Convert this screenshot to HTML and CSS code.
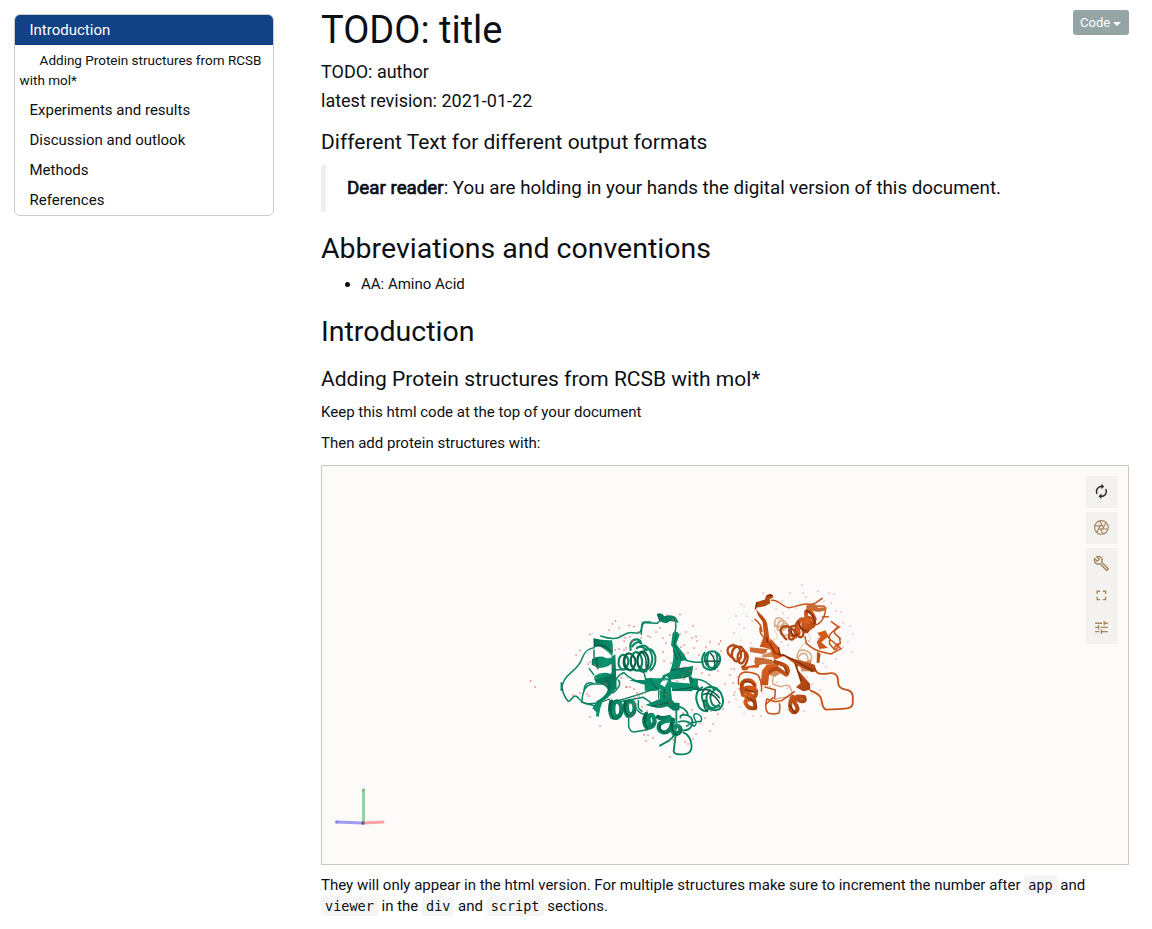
FILE: index.html
```html
<!DOCTYPE html>
<html lang="en">
<head>
<meta charset="utf-8">
<title>TODO: title</title>
<link rel="stylesheet" href="styles.css">
</head>
<body>
<div class="page">
  <nav class="toc">
    <a class="toc-item active">Introduction</a>
    <a class="toc-item sub">Adding Protein structures from RCSB with mol*</a>
    <a class="toc-item">Experiments and results</a>
    <a class="toc-item">Discussion and outlook</a>
    <a class="toc-item">Methods</a>
    <a class="toc-item">References</a>
  </nav>
  <main class="content">
    <header class="head">
      <h1 class="title">TODO: title</h1>
      <button class="code-btn">Code<span class="caret"></span></button>
    </header>
    <h4 class="meta">TODO: author</h4>
    <h4 class="meta">latest revision: 2021-01-22</h4>
    <h3 class="h3 first">Different Text for different output formats</h3>
    <blockquote class="quote"><span class="strong">Dear reader</span>: You are holding in your hands the digital version of this document.</blockquote>
    <h2 class="h2">Abbreviations and conventions</h2>
    <ul class="list"><li>AA: Amino Acid</li></ul>
    <h2 class="h2 intro">Introduction</h2>
    <h3 class="h3 second">Adding Protein structures from RCSB with mol*</h3>
    <p class="para">Keep this html code at the top of your document</p>
    <p class="para">Then add protein structures with:</p>
    <section class="viewer">
      <svg class="scene" viewBox="322 466 806 398" fill="none" stroke-linecap="round" stroke-linejoin="round">
        <defs>
          <linearGradient id="g" x1="0" y1="0" x2="1" y2="1"><stop offset="0" stop-color="#006b50"/><stop offset=".5" stop-color="#0b9470"/><stop offset="1" stop-color="#046e53"/></linearGradient>
          <linearGradient id="o" x1="0" y1="0" x2="1" y2="1"><stop offset="0" stop-color="#a6430f"/><stop offset=".5" stop-color="#d75c1c"/><stop offset="1" stop-color="#9c3f10"/></linearGradient>
        </defs>

        <!-- chain A, upper left -->
        <g transform="translate(550 600) scale(.33333)" stroke="#0a8464">
          <g stroke-width="4.500">
            <path d="M152 108C175 116 190 118 205 113S228 96 245 98S272 102 274 87S274 66 285 66H302"/>
            <path d="M132 143C112 146 104 155 98 172S84 201 64 217S38 245 34 270M130 250C114 244 104 252 102 270"/>
            <path d="M132 150Q130 190 144 206M118 206L131 224M190 210Q240 205 290 215M184 270Q200 222 222 218Q244 242 285 249"/>
          </g>
          <path fill="url(#g)" stroke="none" d="M130 115Q158 122 186 121Q192 150 186 168Q150 128 131 144ZM126 177Q150 164 168 174Q188 178 188 162L190 184Q178 205 145 204L125 194ZM133 228Q158 212 182 222L190 206V235Q178 252 146 248L133 240ZM184 170l12-7 4 105-14-2Z"/>
          <path stroke="#07583f" stroke-width="3.500" d="M137 138Q158 127 184 155M139 174L142 200"/>
          <g stroke-width="6.500">
            <path d="M216 208Q202 201 207 178Q212 160 226 166Q242 178 230 201Q220 214 213 205"/>
            <path stroke="#066549" d="M237 209Q217 203 222 177Q229 151 248 165Q264 184 250 204Q241 217 233 206"/>
            <path d="M257 211Q238 199 243 174Q252 146 270 163Q284 188 269 207Q259 218 251 206"/>
            <path stroke="#055e45" d="M279 211Q258 201 263 172Q273 145 288 160Q301 178 292 203Q283 216 275 207"/>
            <path d="M242 150Q237 127 251 120Q269 113 274 130Q259 120 247 139M260 145Q272 133 290 151"/>
          </g>
          <path stroke="#045c43" stroke-width="4" d="M228 166Q218 188 232 208M247 165Q236 188 252 209M267 163Q256 186 272 210"/>
          <path fill="url(#g)" stroke="none" d="M284 237H322V272H284Z"/>
        </g>

        <!-- chain A, upper right -->
        <g transform="translate(640 600) scale(.33333)" stroke="#0a8464">
          <path stroke-width="4.500" d="M4 103Q4 66 16 68L52 70L60 62M107 64Q110 84 103 104M137 180Q153 188 189 187M164 237Q200 238 222 269M-5 212L12 218L18 240"/>
          <path fill="url(#g)" stroke="none" d="M50 42Q66 36 73 49Q92 42 107 51L117 68L90 63Q80 75 57 62ZM98 99Q110 88 119 105L109 132Q121 148 133 164L142 180L124 183L116 211L88 219Q105 180 99 145L93 135ZM116 205L160 198L155 226L136 234L60 243L69 226ZM16 239L30 233L68 238L94 242L99 262L34 273H16ZM80 228L60 252L80 265L92 242ZM144 224Q164 231 181 270H154Z"/>
          <path stroke="#07523c" stroke-width="3" d="M108 106L103 134L126 181M100 150L112 178M94 210L130 204"/>
          <path stroke-width="6" d="M0 140Q17 130 29 151Q45 177 29 203Q15 218 0 207M12 151Q36 137 46 169Q49 199 31 211M194 158Q180 176 191 200Q211 219 230 202Q248 180 236 162Q218 148 203 158Q188 171 199 193Q212 211 227 199M207 156Q196 175 207 202M226 155Q240 174 224 208"/>
          <path stroke="#075c43" stroke-width="4.500" d="M1 156Q22 162 18 200M193 184H240M211 159Q229 177 223 207"/>
        </g>

        <!-- chain A, lower half -->
        <g transform="translate(550 680) scale(.33333)" stroke="#0a8464">
          <g stroke-width="4.500">
            <path d="M34 30V8C36 30 42 50 53 62C60 70 66 48 76 48C86 48 92 70 108 71S135 70 150 68"/>
            <path d="M96 61Q99 16 128 12H170M94 66L143 80M205 0Q218 15 189 39M200 63Q250 50 310 28M195 68L280 52L319 79"/>
            <path d="M236 112V139Q240 155 252 156L292 149M262 90Q274 105 290 102M265 62V84L276 94"/>
            <path stroke-width="5.500" d="M330 197L358 181Q378 168 379 131M378 155L371 215Q375 225 398 223Q425 223 425 199Q423 167 400 157M379 71V145M414 104Q405 79 379 80M391 113Q390 104 402 104Q430 107 427 131Q422 151 400 151"/>
            <path d="M385 126Q411 117 432 139Q444 132 433 115Q428 100 440 101Q460 108 453 124Q423 125 410 139"/>
          </g>
          <path fill="url(#g)" stroke="none" d="M136 0L193 -18Q207 21 187 39Q175 54 158 64L151 85L146 111L138 108L139 97L127 85L141 62Q166 50 174 29Q162 9 136 8ZM237 0H281L316 17L278 13ZM286 -5H363V35H333V24L287 25ZM306 -5L325 27L342 25L355 0ZM328 31L363 30L366 59L374 68L389 69L388 91L370 92L352 79Q330 88 307 80L286 75L309 65L330 56ZM366 6L429 11V-5L444 1L443 22L427 25V34L366 33Z"/>
          <path stroke="#06553f" stroke-width="3" d="M170 0Q184 18 174 32M302 4L326 31V55M343 29L342 52M367 31L427 22M305 79L360 67M158 65L179 57"/>
          <g stroke="url(#g)" stroke-width="13">
            <path d="M184 65Q176 90 186 111Q205 120 213 99Q218 72 202 64Q188 64 190 93Q191 111 203 109"/>
            <path d="M228 66Q219 87 232 107Q252 109 254 85Q253 62 239 63Q226 69 233 96Q239 108 249 99"/>
            <path d="M289 102Q276 126 291 144Q310 144 314 125Q312 103 302 105Q291 112 299 134"/>
            <path d="M324 111Q333 118 358 111L368 128Q359 160 340 157Q320 153 329 131Q348 119 365 121"/>
            <path d="M369 119Q360 144 372 161Q388 164 392 149Q388 132 374 141"/>
          </g>
          <path stroke="#045a42" stroke-width="5" d="M181 66Q176 92 190 114M226 67Q220 90 234 107M287 107Q279 128 292 144M329 134Q326 152 343 158M366 131Q363 152 378 163"/>
          <g stroke-width="6"><path d="M456 22Q432 37 441 67Q448 94 472 94Q477 72 464 61M466 25Q492 12 512 38Q528 70 509 87Q483 98 465 74Q447 47 462 28Q482 12 506 33M480 30Q461 48 475 76Q490 94 506 75M500 25Q475 39 483 64Q488 83 508 79"/></g>
          <path stroke="#075b43" stroke-width="4.500" d="M447 31Q480 20 508 53M460 44Q487 31 510 71M470 91Q460 82 461 62"/>
        </g>

        <!-- chain B -->
        <g transform="translate(715 575) scale(.33333)" stroke="#c65319">
          <g stroke="#d9aa87" stroke-width="4.500">
            <path d="M179 155Q176 131 190 128Q208 130 205 146Q185 165 183 151M187 165Q186 139 202 136Q221 141 214 158Q194 177 191 163M197 177Q197 147 213 145Q228 151 226 172Q208 190 202 174"/>
            <path stroke="#efdccd" d="M177 165Q192 181 184 191Q168 196 172 205M262 170Q294 178 283 197Q262 205 253 226"/>
            <path d="M247 239Q251 222 269 226Q291 232 290 251Q281 264 265 261Q242 252 247 238M250 247Q258 232 272 236Q286 251 274 270M187 285Q168 308 174 328L198 335Q225 323 228 344Q238 355 219 367Q184 368 172 379"/>
            <path fill="#d78b58" stroke="none" d="M142 239L175 229L178 247L141 247ZM143 263L183 256L182 272L144 267ZM160 284L198 281L198 294L181 305L159 299ZM252 267L289 254V289H261Z"/>
          </g>
          <g stroke-width="4.500">
            <path d="M170 76C190 72 204 98 222 98S258 84 280 87S302 82 322 70M283 92L328 94Q337 112 319 139Q305 154 288 150M322 126L340 125M349 140L372 157Q342 174 340 189Q365 208 378 221M343 183L344 207L359 224Q369 224 370 207Q361 207 359 220"/>
            <path d="M120 133Q138 145 141 169M137 151Q130 174 148 188M270 185L274 205Q296 225 319 230L347 237M347 237Q366 228 378 221M372 154Q355 163 359 175L376 191M374 190L376 205L365 213"/>
            <path stroke-width="5.500" d="M299 281C305 300 322 297 338 296C358 291 369 300 369 315C368 344 386 341 402 347C416 352 414 370 413 388C409 405 385 400 334 404C321 402 322 382 318 370C314 358 300 352 287 347"/>
            <path d="M71 328Q66 295 90 291Q118 292 130 301Q143 327 139 348M150 336L181 345L179 370M155 373Q148 403 159 414Q175 420 192 414Q197 394 193 386M157 372L178 380L200 377L238 350M154 387L174 368"/>
          </g>
          <path fill="url(#o)" stroke="none" d="M123 82L151 73Q149 58 168 56L176 67L164 73L166 85L150 94L122 98L119 107ZM123 103L137 118Q153 130 157 148L164 196L176 203L183 217L205 244L178 255L167 224L151 218L134 215L147 183L143 141L129 121ZM166 190L192 218L190 238L299 269L305 289L291 292L249 272L247 283L285 326L286 344L265 349L243 337L257 324L239 266L201 240L180 253L169 235Z"/>
          <path fill="#c86b34" stroke="none" d="M104 217L158 222L153 234L143 237L105 231ZM120 247L140 248L173 255L171 266L148 267L121 272L118 261ZM274 91L299 87L309 98L336 97L333 106L311 111L274 104Z"/>
          <path fill="url(#o)" stroke="none" d="M81 277L135 267L130 278H103Q96 290 80 285ZM307 174L331 166L341 184L319 202L338 219L313 222L305 201L316 185ZM306 229L317 236L313 264L305 263ZM141 287L155 269L188 267L193 280L164 285L159 331H137Z"/>
          <g stroke="#b24914" stroke-width="7">
            <path d="M58 253Q30 235 40 218Q53 203 73 219Q84 243 72 256Q58 267 50 240Q52 210 79 216Q97 234 88 256Q77 276 68 253Q65 227 87 227Q102 236 97 255Q92 274 82 276"/>
            <path d="M214 193Q190 171 199 160Q213 145 238 167Q245 183 233 193Q219 196 222 180M238 188Q216 171 225 157Q238 146 262 162Q271 180 258 187Q237 183 243 148Q252 127 270 139Q291 158 277 171Q259 172 264 136Q272 119 292 131Q304 149 288 159"/>
          </g>
          <g stroke="url(#o)" stroke-width="12">
            <path d="M229 180Q242 190 251 175Q247 145 257 134Q271 128 273 163Q288 166 286 141Q269 127 274 109Q289 104 299 132L294 153"/>
            <path d="M84 360Q74 326 88 318Q108 311 119 329Q121 345 97 350Q82 351 88 341Q110 332 123 347Q126 370 99 374Q87 366 100 358Q119 360 121 399Q98 404 91 382Q91 370 117 374"/>
            <path d="M165 290Q173 281 188 281L213 299Q223 293 216 277Q206 267 180 261M233 365Q222 379 227 404Q240 421 248 402Q242 382 230 376Q240 360 267 366Q275 382 256 378L232 367"/>
          </g>
          <path stroke="#7f2d08" stroke-width="4" d="M163 203L180 234L194 240M191 218L194 239L205 242M155 188L158 201M91 319Q113 320 118 331M91 344L117 351M97 366L117 381M240 265L259 317M204 239L244 259L293 287M274 108Q297 112 300 146M228 164Q232 193 249 177M249 138Q256 166 275 168M223 390L240 413M208 277L217 297M126 83L122 101M157 62L172 61"/>
        </g>

        <!-- water molecules -->
        <g stroke="#ea5555" stroke-width="1.400">
          <path d="M530.500 681h.1M535 687h.1M576 655h.1M580 650.500h.1M590 634.500h.1M609 630h.1M612.500 624h.1M615.500 621h.1M619 628h.1M629 625.500h.1M634 626.500h.1M638 632h.1M620 636h.1M625 638h.1M624 641h.1M630 637h.1M633 641h.1M641 638h.1M648 636h.1M612 648h.1M615 650h.1M619 649h.1M624 650h.1M626 648h.1M588 664h.1M590 662h.1M595 665h.1M598 668h.1M612 665h.1M621 678h.1M627 687h.1M630 687h.1M606 684h.1"/>
          <path d="M667 615h.1M680 614.500h.1M673 620h.1M675.500 621.500h.1M693 626h.1M660 628h.1M656 632h.1M650 637h.1M663 638h.1M670 635h.1M680 634h.1M686 632h.1M692 638h.1M696 636.500h.1M697 641h.1M681 647h.1M684 645h.1M666 643h.1M663 652h.1M664 661h.1M671 663h.1M677 668h.1M684 654h.1M688 653h.1M694 648h.1M699 655h.1M706 647h.1M710 642h.1M719 644h.1M720.500 641h.1M721 651h.1M714 656h.1M710 661h.1M685 667h.1M690 671h.1M696 669h.1M702 673h.1M709 675h.1M718 671h.1M730 675h.1M734 669h.1M683 676h.1M677 681h.1M684 679h.1M725 684h.1"/>
          <path d="M573 695h.1M580 693h.1M587 694h.1M589 696h.1M590 717h.1M600 726h.1M626 687h.1M634 689h.1M637 693h.1M635 698h.1M639 696h.1M642 694h.1M628 704h.1M634 705h.1M637 704h.1M642 707h.1M629 714h.1M633 715h.1M647 711h.1M658 705h.1M665 694h.1M670 703h.1M645 730h.1M644 735h.1M648 735h.1M653 738h.1M646 741h.1M673 740h.1M676 737h.1M685 742h.1M688 744h.1M693 739h.1M696 734h.1M700 723h.1M705 718h.1M711 711h.1M713 724h.1M710 731h.1M723 709h.1M718 714h.1M692 710h.1M683 713h.1M670 757h.1M733 683h.1M734 695h.1M729 702h.1M739 689h.1"/>
          <path stroke-width="1.200" d="M802 585h.1M790 593h.1M803 593h.1M806 597h.1M818 591h.1M829 593h.1M834 594h.1M824 601h.1M831 603h.1M836 611h.1M841 612h.1M843 623h.1M840 627h.1M850 626h.1M853 634h.1M848 642h.1M852 652h.1M836 659h.1M832 654h.1M823 663h.1M826 667h.1M839 649h.1M827 647h.1M843 647h.1M741 604h.1M744 606h.1M736 616h.1M739 624h.1M734 633h.1M741 640h.1M744 628h.1M751 643h.1M755 609h.1M747 616h.1M752 621h.1M763 593h.1M782 601h.1M776 609h.1M783 613h.1M779 621h.1M788 618h.1M796 608h.1M805 615h.1M812 629h.1M818 638h.1M809 641h.1M820 647h.1M788 645h.1M781 642h.1M770 643h.1M794 660h.1M802 671h.1M807 677h.1M812 684h.1M820 690h.1M812 694h.1M777 682h.1M787 688h.1M770 686h.1M763 693h.1M768 700h.1M735 692h.1M736 699h.1M740 707h.1M744 714h.1M753 716h.1M761 716h.1M791 710h.1M798 705h.1M804 711h.1M820 704h.1M737 677h.1M731 669h.1M744 662h.1M733 643h.1"/>
        </g>

        <!-- axes -->
        <g stroke-width="3"><path stroke="#9c9cf2" d="M336.500 822L363 823"/><path stroke="#f8a3a3" d="M363 823L383 822"/><path stroke="#9bcf9f" d="M363.500 822V790"/></g>
        <g stroke="none"><circle cx="363" cy="823" r="1.700" fill="#8c4779"/><circle cx="337" cy="822" r="1.500" fill="#8585df"/><circle cx="363.500" cy="790" r="1.500" fill="#78b77e"/></g>
      </svg>
      <div class="controls">
        <div class="group"><span class="tool dark"><svg class="icon" viewBox="0 0 24 24"><path d="M12 6v3l4-4-4-4v3c-4.420 0-8 3.580-8 8 0 1.570.46 3.030 1.240 4.260L6.700 14.800c-.45-.83-.7-1.790-.7-2.800 0-3.310 2.690-6 6-6zm6.760 1.740L17.300 9.200c.44.84.7 1.790.7 2.800 0 3.310-2.690 6-6 6v-3l-4 4 4 4v-3c4.420 0 8-3.580 8-8 0-1.570-.46-3.030-1.240-4.260z"/></svg></span></div>
        <div class="group"><span class="tool"><svg class="icon" viewBox="0 0 24 24"><g fill="none" stroke="currentColor" stroke-width="1.700"><circle cx="12" cy="12" r="9.800"/><path d="M13.500 9.400L9.200 2.600M15 12L18.600 4.900M13.500 14.600L21.500 14.300M10.500 14.600L14.800 21.400M9 12L5.400 19.100M10.500 9.400L2.500 9.700M10.500 9.400H13.500L15 12L13.500 14.600H10.500L9 12Z"/></g></svg></span></div>
        <div class="group">
          <span class="tool"><svg class="icon" viewBox="0 0 24 24"><path d="M22.610 18.990l-9.080-9.080c.93-2.340.45-5.100-1.440-7C9.790.61 6.210.4 3.660 2.260L7.500 6.110 6.080 7.520 2.250 3.690C.39 6.230.6 9.820 2.900 12.110c1.860 1.860 4.570 2.350 6.890 1.480l9.110 9.110c.39.39 1.020.39 1.410 0l2.300-2.300c.4-.38.4-1.010 0-1.410zm-3 1.600l-9.460-9.460c-.61.45-1.290.72-2 .82-1.360.2-2.790-.21-3.830-1.250C3.370 9.760 2.930 8.500 3 7.260l3.090 3.090 4.240-4.240-3.090-3.090c1.240-.07 2.490.37 3.440 1.310 1.080 1.080 1.490 2.570 1.240 3.960-.12.71-.42 1.370-.88 1.960l9.450 9.450-.88.89z"/></svg></span>
          <span class="tool"><svg class="icon" viewBox="0 0 24 24"><path d="M7 14H5v5h5v-2H7v-3zm-2-4h2V7h3V5H5v5zm12 7h-3v2h5v-5h-2v3zM14 5v2h3v3h2V5h-5z"/></svg></span>
          <span class="tool"><svg class="icon" viewBox="0 0 24 24"><path d="M3 17v2h6v-2H3zM3 5v2h10V5H3zm10 16v-2h8v-2h-8v-2h-2v6h2zM7 9v2H3v2h4v2h2V9H7zm14 4v-2H11v2h10zm-6-4h2V7h4V5h-4V3h-2v6z"/></svg></span>
        </div>
      </div>
    </section>
    <p class="para after">They will only appear in the html version. For multiple structures make sure to increment the number after <code>app</code> and <code>viewer</code> in the <code>div</code> and <code>script</code> sections.</p>
  </main>
</div>
</body>
</html>
```
FILE: styles.css
```css
* { box-sizing: border-box; }
body { margin: 0; background: #fff; color: #0c1014; font: 15px/21.4px Roboto, sans-serif; }
h1, h2, h3, h4, p, ul, blockquote { margin: 0; font-weight: 400; }
.page { display: flex; align-items: flex-start; padding: 0 23px 0 14px; height: 929px; overflow: hidden; }
.toc { width: 260px; flex: none; margin: 14px 47px 0 0; border: 1px solid #ccc; border-radius: 6px; overflow: hidden; }
.toc-item { display: block; height: 30px; padding: 0 14.500px; line-height: 30px; }
.active { background: #124185; color: #fff; }
.sub { height: 50px; padding: 5px 5px 0 4.600px; font-size: 13.500px; line-height: 20px; text-indent: 20px; }
.content { flex: 1; min-width: 0; padding-top: 8px; }
.head { display: flex; justify-content: space-between; align-items: flex-start; height: 54px; }
.title { font-size: 38px; line-height: 45px; }
.code-btn { display: flex; align-items: center; gap: 3px; width: 56px; height: 25px; margin-top: 2px; padding: 0 0 0 7px; border: 0; border-radius: 3px; background: #95a5a6; color: #fff; font: 13px/25px Roboto, sans-serif; }
.caret { border: 4px solid transparent; border-top-color: #fff; border-bottom: 0; margin-top: 3px; }
.meta { font-size: 18px; line-height: 20px; margin-bottom: 9px; }
.h3 { font-size: 21px; line-height: 23px; }
.first { margin-top: 20px; }
.quote { height: 47px; margin: 11px 0 20px; padding: 10px 21px; border-left: 5px solid #ecf0f1; font-size: 18.750px; line-height: 26px; }
.strong { -webkit-text-stroke: .7px currentColor; }
.h2 { font-size: 28.500px; line-height: 33px; }
.list { padding-left: 40px; margin: 9px 0 20px; }
.intro { margin-bottom: 19.600px; }
.second { margin-bottom: 11px; }
.para { margin-bottom: 9.600px; }
.viewer { position: relative; height: 400px; margin: 10.600px 0 9.600px; border: 1px solid #cec9ba; background: #fcfbf9; }
.scene { display: block; width: 100%; height: 100%; }
.controls { position: absolute; top: 10px; right: 10px; display: flex; flex-direction: column; gap: 4px; }
.group { background: #f3f2ee; }
.tool { display: flex; align-items: center; justify-content: center; width: 32px; height: 32px; padding: 0 1.200px 1px 0; color: #a48660; }
.dark { color: #332b1f; }
.icon { width: 16.800px; height: 16.800px; fill: currentColor; }
code { padding: 2px 4px; border-radius: 4px; background: #f5f5f5; font: 13.500px "DejaVu Sans Mono", monospace; }
```
